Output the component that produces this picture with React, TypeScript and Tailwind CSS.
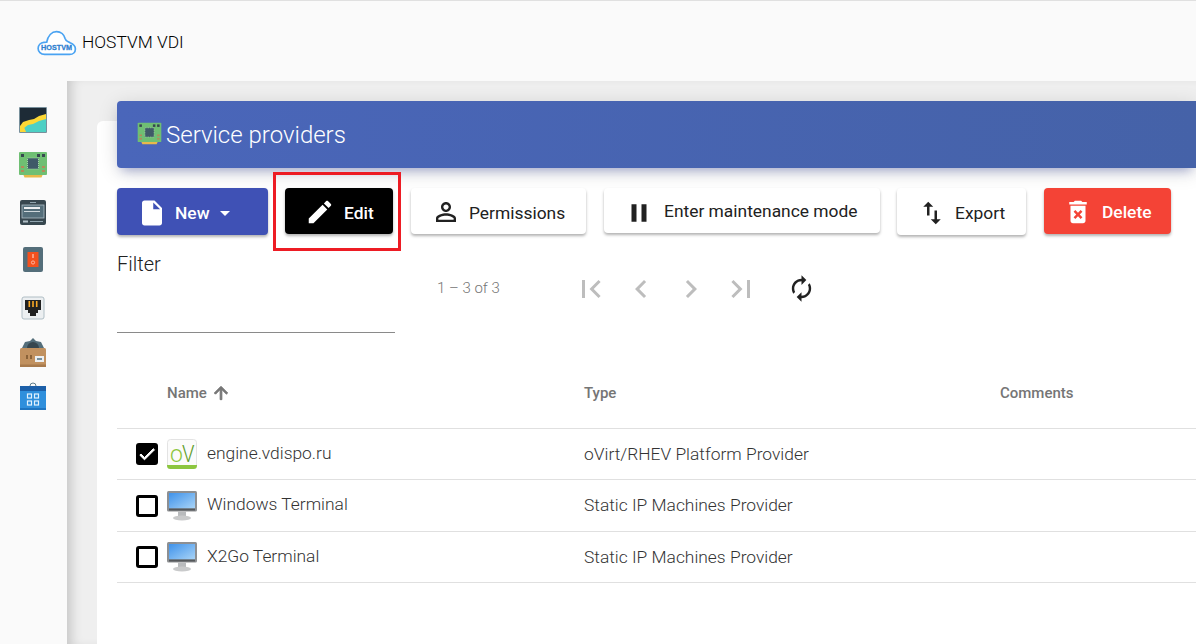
import React from "react";

// material icon helper
const Mi = ({ d, size = 24, className = "", bold = 0 }: { d: string; size?: number; className?: string; bold?: number }) => (
  <svg width={size} height={size} viewBox="0 0 24 24" fill="currentColor" stroke={bold ? "currentColor" : "none"} strokeWidth={bold} className={className}>
    <path d={d} />
  </svg>
);

const icons = {
  file: "M6 2c-1.1 0-1.99.9-1.99 2L4 20c0 1.1.89 2 1.99 2H18c1.1 0 2-.9 2-2V8l-6-6H6zm7 7V3.5L18.5 9H13z",
  drop: "M7 10l5 5 5-5z",
  edit: "M3 17.25V21h3.75L17.81 9.94l-3.75-3.75L3 17.25zM20.71 7.04c.39-.39.39-1.02 0-1.41l-2.34-2.34c-.39-.39-1.02-.39-1.41 0l-1.83 1.83 3.75 3.75 1.83-1.83z",
  person: "M12 5.9c1.16 0 2.1.94 2.1 2.1s-.94 2.1-2.1 2.1S9.9 9.16 9.9 8s.94-2.1 2.1-2.1m0 9c2.97 0 6.1 1.46 6.1 2.1v1.1H5.9V17c0-.64 3.13-2.1 6.1-2.1M12 4C9.79 4 8 5.79 8 8s1.79 4 4 4 4-1.79 4-4-1.79-4-4-4zm0 9c-2.67 0-8 1.34-8 4v3h16v-3c0-2.66-5.33-4-8-4z",
  pause: "M6 19h4V5H6v14zm8-14v14h4V5h-4z",
  importExport: "M9 3L5 6.99h3V14h2V6.99h3L9 3zm7 14.01V10h-2v7.01h-3L15 21l4-3.99h-3z",
  trash: "M6 19c0 1.1.9 2 2 2h8c1.1 0 2-.9 2-2V7H6v12zm2.46-7.12l1.41-1.41L12 12.59l2.12-2.12 1.41 1.41L13.41 14l2.12 2.12-1.41 1.41L12 15.41l-2.12 2.12-1.41-1.41L10.59 14l-2.13-2.12zM15.5 4l-1-1h-5l-1 1H5v2h14V4z",
  first: "M18.41 16.59L13.82 12l4.59-4.59L17 6l-6 6 6 6zM6 6h2v12H6z",
  prev: "M15.41 7.41L14 6l-6 6 6 6 1.41-1.41L10.83 12z",
  next: "M10 6L8.59 7.41 13.17 12l-4.58 4.59L10 18l6-6z",
  last: "M5.59 7.41L10.18 12l-4.59 4.59L7 18l6-6-6-6zM16 6h2v12h-2z",
  renew: "M12 6v3l4-4-4-4v3c-4.42 0-8 3.58-8 8 0 1.57.46 3.03 1.24 4.26L6.7 14.8c-.45-.83-.7-1.79-.7-2.8 0-3.31 2.69-6 6-6zm6.76 1.74L17.3 9.2c.44.84.7 1.79.7 2.8 0 3.31-2.69 6-6 6v-3l-4 4 4 4v-3c4.42 0 8-3.58 8-8 0-1.57-.46-3.03-1.24-4.26z",
  up: "M4 12l1.41 1.41L11 7.83V20h2V7.83l5.58 5.59L20 12l-8-8-8 8z",
  check: "M9 16.17L4.83 12l-1.42 1.41L9 19 21 7l-1.41-1.41z",
};

const Logo = () => (
  <svg width="40" height="26" viewBox="0 0 42 27" fill="none">
    <path
      d="M8 25.500C4 25.500 1.200 22.600 1.200 19.200c0-3.400 2.600-6 6-6.400 1-.1 2-.2 3-.2C11.500 6 15.500 1.500 20.500 1.500c4.600 0 8 3.400 9 7.200 1 3.400 3 3 5.200 4.600 3 1.200 5.600 3.200 5.600 6.400 0 3.500-2.600 5.800-6 5.800H8z"
      stroke="#4aa3f2"
      strokeWidth="1.800"
      fill="#fff"
    />
    <text x="20.500" y="20.500" textAnchor="middle" fontSize="7.600" fontWeight="700" stroke="#2f7fd0" strokeWidth="0.300" fill="#2f7fd0" fontFamily="'Liberation Sans', sans-serif">
      HOSTVM
    </text>
  </svg>
);

const ChipIcon = ({ size = 32 }: { size?: number }) => (
  <svg width={size} height={size} viewBox="0 0 32 32">
    <path d="M6 24h20l-1.500 3.500h-17z" fill="#e8b94a" />
    <rect x="2" y="2" width="28" height="23" rx="1" fill="#6fbf73" />
    <rect x="4" y="4" width="3" height="3" fill="#37474f" />
    <rect x="20" y="4" width="3" height="3" fill="#37474f" />
    <rect x="25" y="4" width="3" height="3" fill="#37474f" />
    <rect x="10.500" y="8" width="11" height="11" fill="#3f5a68" stroke="#a5d6a7" strokeWidth="1" strokeDasharray="1 1" />
    <rect x="4" y="16" width="3" height="2" fill="#b58a5a" />
    <rect x="4" y="20" width="3" height="2" fill="#b58a5a" />
    <rect x="25" y="16" width="3" height="2" fill="#b58a5a" />
    <rect x="25" y="20" width="3" height="2" fill="#b58a5a" />
  </svg>
);

const GraphIcon = () => (
  <svg width="32" height="32" viewBox="0 0 32 32">
    <rect x="2" y="3" width="28" height="26" rx="1" fill="#78909c" />
    <rect x="3" y="4" width="26" height="24" fill="#1d2b36" />
    <path d="M3 28v-6l3-4 6-2 5-1 5-3 7-2v8z" fill="#fdd835" />
    <path d="M3 28h26V15l-7 2-6 3-5 1-4 3-2 2z" fill="#4dd0c4" />
    <path d="M3 28v-4l4-1 2 5z" fill="#fdd835" />
  </svg>
);

const ServerIcon = () => (
  <svg width="32" height="32" viewBox="0 0 32 32">
    <rect x="3" y="3" width="26" height="25" rx="2" fill="#37474f" />
    <rect x="5" y="8" width="22" height="13" fill="#546e7a" stroke="#b0bec5" strokeWidth="0.800" />
    <rect x="7" y="10" width="16" height="2" fill="#eceff1" />
    <rect x="7" y="14" width="16" height="1" fill="#cfd8dc" />
    <rect x="13" y="5" width="6" height="1" fill="#90a4ae" />
    <rect x="6" y="23.500" width="5" height="2" fill="#b0bec5" />
    <rect x="13" y="24" width="13" height="1" fill="#90a4ae" />
  </svg>
);

const SwitchIcon = () => (
  <svg width="32" height="32" viewBox="0 0 32 32">
    <rect x="6" y="3" width="20" height="25" rx="2" fill="#546e7a" />
    <rect x="10.500" y="8" width="11" height="15" rx="0.500" fill="#f4511e" />
    <rect x="15.400" y="10" width="1.200" height="4" fill="#ffccbc" />
    <circle cx="16" cy="18.500" r="1.600" fill="none" stroke="#ffccbc" strokeWidth="0.800" />
  </svg>
);

const PortIcon = () => (
  <svg width="32" height="32" viewBox="0 0 32 32">
    <rect x="5" y="5" width="22" height="22" rx="2" fill="#eceff1" stroke="#b0bec5" />
    <path d="M8 8h16v10h-3v3h-2v3h-6v-3h-2v-3H8z" fill="#212121" />
    <rect x="11.500" y="9" width="1.600" height="6" fill="#f9a825" />
    <rect x="15.200" y="9" width="1.600" height="6" fill="#f9a825" />
    <rect x="18.900" y="9" width="1.600" height="6" fill="#f9a825" />
  </svg>
);

const BoxIcon = () => (
  <svg width="32" height="36" viewBox="0 0 32 36">
    <path d="M5 14l3-6 5-1 3-3 3 3 5 1 3 6z" fill="#546e7a" />
    <path d="M10 14a6 6 0 0 1 12 0z" fill="#37474f" />
    <rect x="3" y="14" width="26" height="19" rx="1.500" fill="#c1915f" />
    <rect x="3" y="30.500" width="26" height="2.500" fill="#a87a4c" />
    <rect x="9" y="21" width="2" height="4" fill="#8a6238" />
    <rect x="13" y="21" width="2" height="4" fill="#8a6238" />
    <rect x="18" y="22" width="9" height="6" fill="#eceff1" />
    <rect x="20" y="24" width="5" height="2" fill="#78909c" />
  </svg>
);

const StoreIcon = () => (
  <svg width="32" height="32" viewBox="0 0 32 32">
    <path d="M13 5a3 3 0 0 1 6 0" fill="none" stroke="#607d8b" strokeWidth="1" />
    <rect x="3" y="5" width="26" height="24" rx="1" fill="#2f8fdc" />
    <rect x="3" y="5" width="26" height="5" fill="#1c5fa8" />
    <rect x="3" y="27" width="26" height="2" fill="#1f74c0" />
    <g fill="none" stroke="#e3f2fd" strokeWidth="1.200">
      <rect x="10.500" y="13" width="4" height="4" />
      <rect x="17.500" y="13" width="4" height="4" />
      <rect x="10.500" y="20" width="4" height="4" />
      <rect x="17.500" y="20" width="4" height="4" />
    </g>
  </svg>
);

const OvirtIcon = () => (
  <svg width="30" height="30" viewBox="0 0 30 30">
    <rect x="0.500" y="0.500" width="29" height="29" rx="3" fill="#fbfbfb" stroke="#e3e3e3" />
    <path d="M0 26h30v.500a3.500 3.500 0 0 1-3.500 3.500h-23A3.500 3.500 0 0 1 0 26.500z" fill="#8cc63f" />
    <text x="3" y="23" fontSize="23" fill="#8cc63f" fontFamily="Roboto, sans-serif" fontWeight="300">o</text>
    <text x="15" y="23" fontSize="24" textLength="12.500" lengthAdjust="spacingAndGlyphs" fill="#5f9e2c" fontFamily="Roboto, sans-serif" fontWeight="300">V</text>
  </svg>
);

const MonitorIcon = () => (
  <svg width="30" height="30" viewBox="0 0 30 30">
    <defs>
      <linearGradient id="scr" x1="0" y1="0" x2="1" y2="1">
        <stop offset="0" stopColor="#3f92ea" />
        <stop offset="1" stopColor="#a9d4f7" />
      </linearGradient>
    </defs>
    <rect x="0" y="0" width="30" height="20.500" rx="1.500" fill="#8d8f92" />
    <rect x="2" y="2" width="26" height="15.500" fill="url(#scr)" />
    <rect x="2" y="17.500" width="26" height="2" fill="#55585b" />
    <rect x="11" y="20.500" width="8" height="5" fill="#b9bbbd" />
    <ellipse cx="15" cy="27" rx="9" ry="2.500" fill="#c9cacb" />
  </svg>
);

const rows = [
  { name: "engine.vdispo.ru", type: "oVirt/RHEV Platform Provider", checked: true, h: "h-[51px]", icon: <OvirtIcon /> },
  { name: "Windows Terminal", type: "Static IP Machines Provider", checked: false, h: "h-[52px]", icon: <MonitorIcon /> },
  { name: "X2Go Terminal", type: "Static IP Machines Provider", checked: false, h: "h-[51px]", icon: <MonitorIcon /> },
];

export default function App() {
  return (
    <div className="w-[1196px] h-[644px] overflow-hidden flex flex-col bg-[#fafafa] font-['Roboto',sans-serif] border-t border-[#e0e0e0]">
      {/* top bar */}
      <header className="h-[80px] shrink-0 flex items-center pl-[37px] gap-[5px] pt-[3px]">
        <Logo />
        <span className="text-[17.400px] font-light text-black">HOSTVM VDI</span>
      </header>

      <div className="flex flex-1 min-h-0">
        {/* sidebar */}
        <aside className="w-[67px] shrink-0 flex flex-col items-center pt-[23px] pr-[2px] bg-[#fafafa]">
          <div className="h-[46px]"><GraphIcon /></div>
          <div className="h-[47px]"><ChipIcon /></div>
          <div className="h-[47px]"><ServerIcon /></div>
          <div className="h-[48px]"><SwitchIcon /></div>
          <div className="h-[42px]"><PortIcon /></div>
          <div className="h-[47px]"><BoxIcon /></div>
          <div><StoreIcon /></div>
        </aside>

        {/* content */}
        <main className="flex-1 min-w-0 bg-[#efefef] pl-[30px] pt-[40px] shadow-[inset_10px_0_12px_-6px_rgba(0,0,0,0.18)]">
          <div className="flow-root h-full bg-white rounded-tl-[6px] pl-[20px]">
            <div className="-mt-[20px] h-[67px] flex items-center pl-[19px] gap-[3px] rounded-l-[4px] bg-gradient-to-r from-[#4a66ba] to-[#4562a8] shadow-[0_4px_20px_rgba(0,0,0,0.14),0_7px_10px_-5px_rgba(63,81,181,0.4)]">
              <ChipIcon size={27} />
              <h1 className="text-[24px] font-light text-white">Service providers</h1>
            </div>

            {/* toolbar */}
            <div className="flex items-start mt-[20px] gap-[17px] text-[17.400px] relative">
              <button className="w-[151px] h-[47px] flex items-center pl-[20px] pt-[2px] rounded-[4px] bg-[#3f51b5] text-white font-medium shadow-[0_2px_3px_rgba(0,0,0,0.3)]">
                <Mi d={icons.file} size={30} />
                <span className="ml-[8px] mt-[1px]">New</span>
                <Mi d={icons.drop} size={24} className="ml-[3px]" />
              </button>
              <div className="relative">
                <button className="w-[108px] h-[46px] flex items-center pl-[20px] pt-[2px] rounded-[4px] bg-black text-white font-medium shadow-[0_2px_3px_rgba(0,0,0,0.3)]">
                  <Mi d={icons.edit} size={30} />
                  <span className="ml-[9px] mt-[2px]">Edit</span>
                </button>
                <div className="absolute -left-[12px] -right-[8px] -top-[16px] h-[79px] border-[3px] border-[#ed1c24] pointer-events-none" />
              </div>
              <button className="ml-[1px] w-[175px] h-[46px] flex items-center pl-[20px] pt-[2px] rounded-[4px] bg-white text-[#212121] shadow-[0_2px_3px_rgba(0,0,0,0.3)]">
                <Mi d={icons.person} size={30} />
                <span className="ml-[8px] mt-[2px]">Permissions</span>
              </button>
              <button className="ml-[1px] w-[276px] h-[45px] flex items-center pl-[20px] pt-[4px] rounded-[4px] bg-white text-[#212121] shadow-[0_2px_3px_rgba(0,0,0,0.3)]">
                <Mi d={icons.pause} size={30} />
                <span className="ml-[10px] -mt-[3px]">Enter maintenance mode</span>
              </button>
              <button className="w-[129px] h-[47px] flex items-center pl-[20px] pt-[2px] rounded-[4px] bg-white text-[#212121] shadow-[0_2px_3px_rgba(0,0,0,0.3)]">
                <Mi d={icons.importExport} size={30} />
                <span className="ml-[8px] mt-[1px]">Export</span>
              </button>
              <button className="ml-[1px] w-[127px] h-[46px] flex items-center pl-[19px] pt-[2px] rounded-[4px] bg-[#f44336] text-white font-medium shadow-[0_2px_3px_rgba(0,0,0,0.3)]">
                <Mi d={icons.trash} size={30} />
                <span className="ml-[9px] mt-[1px]">Delete</span>
              </button>
            </div>

            {/* filter + paginator */}
            <div className="flex mt-[17px]">
              <div className="w-[278px] h-[81px] border-b border-[#8a8a8a] text-[20px] font-light text-[#212121] leading-[24px]">
                Filter
              </div>
              <div className="flex items-center h-[50px] ml-[42px] mt-[12px]">
                <span className="text-[15px] font-light text-[#757575] w-[129px] -mt-[2px]">1 – 3 of 3</span>
                <div className="w-[50px] flex justify-center text-[#bdbdbd]"><Mi d={icons.first} size={36} /></div>
                <div className="w-[50px] flex justify-center text-[#bdbdbd]"><Mi d={icons.prev} size={36} /></div>
                <div className="w-[50px] flex justify-center text-[#bdbdbd]"><Mi d={icons.next} size={36} /></div>
                <div className="w-[50px] flex justify-center text-[#bdbdbd]"><Mi d={icons.last} size={36} /></div>
                <div className="w-[70px] flex justify-center text-[#212121] -mt-[2px]"><Mi d={icons.renew} size={29} /></div>
              </div>
            </div>

            {/* table */}
            <div className="mt-[35px]">
              <div className="grid grid-cols-[467px_416px_1fr] h-[61px] items-start border-b border-[#e0e0e0] text-[15px] font-medium text-[#757575]">
                <div className="pl-[50px] flex items-center gap-[4px] h-[50px]">
                  Name
                  <Mi d={icons.up} size={20} bold={1.200} />
                </div>
                <div className="h-[50px] flex items-center">Type</div>
                <div className="h-[50px] flex items-center">Comments</div>
              </div>
              {rows.map((r) => (
                <div key={r.name} className={`grid grid-cols-[467px_1fr] items-center border-b border-[#e0e0e0] text-[17.400px] font-light text-[#333333] ${r.h}`}>
                  <div className="flex items-center pl-[19px]">
                    {r.checked ? (
                      <div className="w-[22px] h-[22px] rounded-[3px] bg-black flex items-center justify-center text-white">
                        <Mi d={icons.check} size={20} bold={1.200} />
                      </div>
                    ) : (
                      <div className="w-[22px] h-[22px] rounded-[3px] border-[3px] border-black bg-white" />
                    )}
                    <div className="ml-[9px]">{r.icon}</div>
                    <span className="ml-[10px] -mt-[2px]">{r.name}</span>
                  </div>
                  <div>{r.type}</div>
                </div>
              ))}
            </div>
          </div>
        </main>
      </div>
    </div>
  );
}
